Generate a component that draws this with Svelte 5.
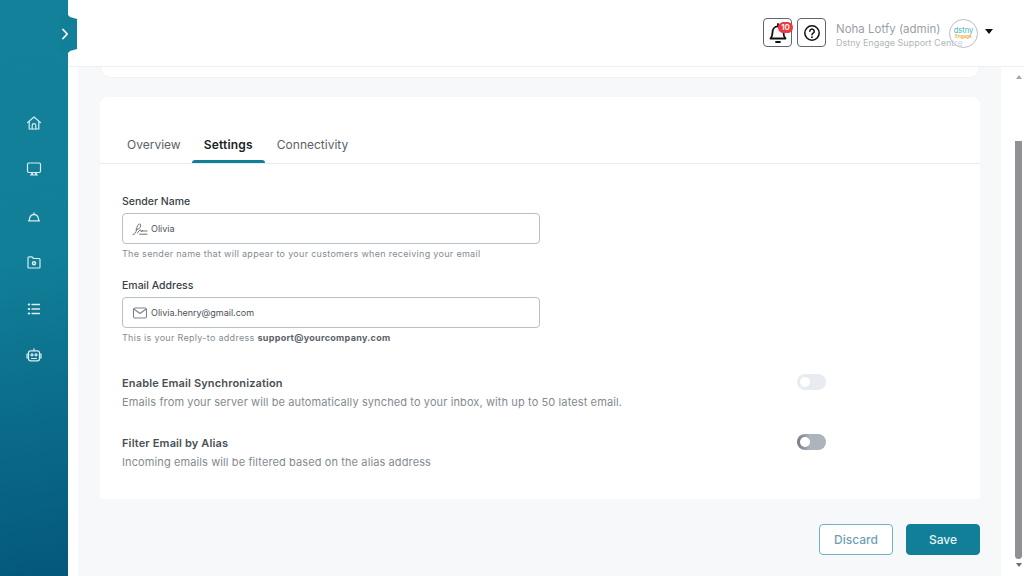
<script>
  const tabs = ['Overview', 'Settings', 'Connectivity'];
</script>

<div class="app">
  <aside class="sidebar">
    <div class="toggle">
      <svg width="10" height="12" viewBox="0 0 10 12" fill="none" stroke="#fff" stroke-width="1.8" stroke-linecap="round" stroke-linejoin="round"><path d="M3 1.500 7.200 6 3 10.500"/></svg>
    </div>
    <nav class="nav">
      <svg viewBox="0 0 16 16" fill="none" stroke="#dcecf1" stroke-width="1.200" stroke-linejoin="round" stroke-linecap="round"><path d="M1.500 7.600 8 2l6.500 5.600M3.200 6.500V14h9.600V6.500"/><path d="M6.200 14v-3.500a1.800 1.800 0 0 1 3.600 0V14"/></svg>
      <svg viewBox="0 0 16 16" fill="none" stroke="#dcecf1" stroke-width="1.200" stroke-linejoin="round" stroke-linecap="round"><rect x="1.500" y="2" width="13" height="9.500" rx="1.200"/><path d="M6 11.500 5.500 14M10 11.500l.5 2.500M4.500 14h7M6.500 11.500v2M9.500 11.500v2"/></svg>
      <svg viewBox="0 0 16 16" fill="none" stroke="#dcecf1" stroke-width="1.300" stroke-linejoin="round" stroke-linecap="round"><path d="M3.200 12.500C3.500 9 5.500 6.500 8 6.500s4.500 2.500 4.800 6M2.500 12.800h11M8 6.500V5"/></svg>
      <svg viewBox="0 0 16 16" fill="none" stroke="#dcecf1" stroke-width="1.200" stroke-linejoin="round" stroke-linecap="round"><path d="M2 3.800c0-.6.400-1 1-1h3l1.500 1.700H13c.6 0 1 .4 1 1V13c0 .6-.4 1-1 1H3c-.6 0-1-.4-1-1z"/><circle cx="8" cy="9.200" r="1.500" stroke-width="1.500"/></svg>
      <svg viewBox="0 0 16 16" fill="none" stroke="#dcecf1" stroke-width="1.300" stroke-linecap="round"><path d="M6 3.500h7.500M6 8h7.500M6 12.500h7.500"/><path d="M2.800 3.500h.4M2.800 8h.4M2.800 12.500h.4" stroke-width="2.200"/></svg>
      <svg viewBox="0 0 16 16" fill="none" stroke="#dcecf1" stroke-width="1.200" stroke-linejoin="round" stroke-linecap="round"><rect x="2.500" y="3.800" width="11" height="10" rx="2"/><path d="M8 3.800V1.800M2.500 7H1v4h1.500M13.500 7H15v4h-1.500M5.500 11.500h5"/><circle cx="6" cy="7.800" r="1"/><circle cx="10" cy="7.800" r="1"/></svg>
    </nav>
  </aside>

  <div class="right">
    <header class="header">
      <button class="icon-btn" aria-label="Notifications">
        <svg width="20" height="24" viewBox="0 0 20 24" fill="none" stroke="#111" stroke-width="1.800" stroke-linejoin="round" stroke-linecap="round"><path d="M2.500 17.500c1.500-1.500 2-3 2-6 0-3.600 2.200-6.200 5.500-6.200s5.500 2.600 5.500 6.200c0 3 .5 4.500 2 6z"/><path d="M8 21h4M10 5.300V3"/></svg>
        <span class="badge">10</span>
      </button>
      <button class="icon-btn" aria-label="Help">
        <svg width="18" height="18" viewBox="0 0 18 18" fill="none" stroke="#111" stroke-width="1.500" stroke-linecap="round"><circle cx="9" cy="9" r="7.200"/><path d="M6.800 7.200a2.200 2.200 0 1 1 3.400 1.900c-.8.500-1.200.9-1.200 1.700"/><path d="M9 13.100v.1" stroke-width="1.800"/></svg>
      </button>
      <div class="user">
        <div class="user-name">Noha Lotfy (admin)</div>
        <div class="user-org">Dstny Engage Support Centre</div>
      </div>
      <div class="avatar">
        <span class="logo-a">dstny</span>
        <span class="logo-b">Engage</span>
      </div>
      <span class="caret"></span>
    </header>

    <div class="body">
      <main class="content">
        <div class="stub"></div>
        <section class="card">
          <div class="tabs">
            {#each tabs as t, i}
              <div class="tab" class:active={i === 1}>{t}</div>
            {/each}
          </div>
          <div class="form">
            <div class="field">
              <div class="label">Sender Name</div>
              <div class="input">
                <svg width="16" height="14" viewBox="0 0 16 14" fill="none" stroke="#6f757d" stroke-width="1" stroke-linecap="round" stroke-linejoin="round"><path d="M1 12.500c2 .2 3-2 3.500-5 .4-2.500 1.200-5.500 3-5.500 1.300 0 1.500 1.600.6 3.200C7.300 7.200 5.200 7.800 4 7.300M5.500 11c1-1.500 2-3 3-3 .6 0 0 1.500.6 1.500.5 0 1-.5 1.500-.8M9.500 9h5.500M7.500 12.200h7.500"/></svg>
                <span>Olivia</span>
              </div>
              <div class="hint">The sender name that will appear to your customers when receiving your email</div>
            </div>
            <div class="field second">
              <div class="label">Email Address</div>
              <div class="input">
                <svg width="16" height="14" viewBox="0 0 16 14" fill="none" stroke="#7d838a" stroke-width="1.100" stroke-linejoin="round"><rect x="1.500" y="2" width="13" height="10" rx="1.500"/><path d="m1.800 3 6.200 4.500L14.200 3"/></svg>
                <span>Olivia.henry@gmail.com</span>
              </div>
              <div class="hint">This is your Reply-to address <b>support@yourcompany.com</b></div>
            </div>
            <div class="opt first">
              <div class="opt-text">
                <div class="opt-title">Enable Email Synchronization</div>
                <div class="opt-desc">Emails from your server will be automatically synched to your inbox, with up to 50 latest email.</div>
              </div>
              <span class="switch light"><i></i></span>
            </div>
            <div class="opt next">
              <div class="opt-text">
                <div class="opt-title">Filter Email by Alias</div>
                <div class="opt-desc">Incoming emails will be filtered based on the alias address</div>
              </div>
              <span class="switch dark"><i></i></span>
            </div>
          </div>
        </section>
        <div class="actions">
          <button class="btn ghost">Discard</button>
          <button class="btn solid">Save</button>
        </div>
      </main>
      <div class="scrollbar">
        <span class="arrow up"></span>
        <span class="thumb"></span>
        <span class="arrow down"></span>
      </div>
    </div>
  </div>
</div>

<style>
  :global(body) { margin: 0; background: #fff; }
  .app {
    width: 1024px; height: 576px; display: flex; overflow: hidden;
    font-family: Inter, "Liberation Sans", sans-serif; color: #3c424a;
  }
  .sidebar {
    width: 68px; flex: none; position: relative;
    background: linear-gradient(170deg, #128199 0%, #117f98 45%, #04587a 100%);
  }
  .toggle {
    position: absolute; left: 60px; top: 15px; width: 17px; height: 38px; box-sizing: border-box;
    background: #117f98; border-radius: 0 4px 4px 0; clip-path: polygon(0 0, 8px 0, 10px 2px, 17px 4px, 17px 34px, 10px 36px, 8px 38px, 0 38px);
    display: flex; align-items: center;
  }
  .nav {
    display: flex; flex-direction: column; align-items: center; gap: 30.400px; padding-top: 115px;
  }
  .nav svg { width: 16px; height: 16px; display: block; }
  .right { flex: 1; display: flex; flex-direction: column; min-width: 0; }
  .header {
    height: 67px; box-sizing: border-box; flex: none; background: #fff; border-bottom: 1px solid #eef0f2;
    display: flex; align-items: flex-start; padding: 18px 30px 0 695px;
  }
  .icon-btn {
    width: 29px; height: 29px; box-sizing: border-box; padding: 0; background: #fff; border: 1px solid #5f6670; border-radius: 4px;
    display: flex; align-items: center; justify-content: center; position: relative; margin-right: 5px;
  }
  .badge {
    position: absolute; top: 3px; right: -2px; width: 15px; height: 11px; border-radius: 6px; background: #f0383f; color: #fff;
    font: 600 8px/11px Inter, sans-serif; text-align: center;
  }
  .user { margin-left: 5px; width: 113px; white-space: nowrap; position: relative; }
  .user-name { font-size: 11.500px; line-height: 15px; margin-top: 4px; color: #9aa0a6; }
  .user-org { font-size: 9px; line-height: 12px; color: #b1b5ba; }
  .avatar {
    width: 29px; height: 29px; box-sizing: border-box; border: 1px solid #b9bdc6; border-radius: 50%; position: relative; z-index: 1;
    display: flex; flex-direction: column; align-items: center; justify-content: center; margin-top: 1px;
    background: rgba(255,255,255,.45);
  }
  .logo-a { font-size: 7.500px; color: #35b3c0; line-height: 6px; }
  .logo-b { font-size: 4.500px; color: #f0a530; line-height: 5px; font-weight: 600; }
  .caret {
    width: 0; height: 0; margin: 11px 0 0 7px;
    border-left: 4.500px solid transparent; border-right: 4.500px solid transparent; border-top: 5px solid #111;
  }
  .body { flex: 1; display: flex; min-height: 0; }
  .content {
    margin-left: 10px; width: 923px; flex: none; box-sizing: border-box; background: #f7f8fa; padding: 0 21px 0 22px;
    display: flex; flex-direction: column;
  }
  .stub {
    height: 11px; flex: none; background: #fff; border: 1px solid #f0f1f3; border-top: 0; border-radius: 0 0 10px 10px; box-sizing: border-box;
  }
  .card {
    margin-top: 19px; height: 402px; flex: none; background: #fff; border-radius: 8px 8px 0 0; box-sizing: border-box;
  }
  .tabs {
    height: 67px; box-sizing: border-box; border-bottom: 1px solid #e9ebee; display: flex; padding: 30px 0 0 15px; margin-left: -1px;
  }
  .tab {
    padding: 10px 12px 0; height: 36px; box-sizing: border-box; font-size: 12px; line-height: 16px; color: #5b6169; position: relative;
  }
  .tab:first-child { padding-left: 13px; padding-right: 11px; }
  .tab.active { color: #1b1f24; font-weight: 600; letter-spacing: .2px; }
  .tab.active::after {
    content: ""; position: absolute; left: 0; right: 0; bottom: 0; height: 3px; background: #117f98; border-radius: 3px 3px 0 0;
  }
  .form { padding: 31px 0 0 22px; }
  .field.second { margin-top: 19px; }
  .label { font-size: 10.500px; line-height: 14px; color: #3a3f45; font-weight: 500; }
  .input {
    width: 418px; height: 31px; box-sizing: border-box; margin-top: 4px; border: 1px solid #b9bfc7; border-radius: 4px; background: #fff;
    display: flex; align-items: center; gap: 3px; padding-left: 9px; font-size: 9px; color: #4a5058;
  }
  .hint { margin-top: 4px; font-size: 9px; line-height: 12px; color: #868b92; letter-spacing: .3px; }
  .hint b { color: #5b6169; font-weight: 700; }
  .opt { display: flex; width: 704px; justify-content: space-between; align-items: flex-start; }
  .opt.first { margin-top: 32px; }
  .opt.next { margin-top: 27px; }
  .opt-title { font-size: 11px; line-height: 14px; font-weight: 600; color: #4a4f56; letter-spacing: .14px; }
  .opt-desc { margin-top: 5px; font-size: 11px; line-height: 14px; color: #858a91; letter-spacing: .11px; }
  .switch { width: 29px; height: 16px; border-radius: 8px; display: block; position: relative; margin-top: -2px; flex: none; }
  .switch.light { background: #e8ebef; }
  .switch.dark { background: linear-gradient(90deg, #727a85, #aeb4bb 45%); }
  .switch i { position: absolute; left: 3px; top: 3px; width: 10px; height: 10px; border-radius: 50%; background: #fff; }
  .actions { display: flex; justify-content: flex-end; gap: 13px; margin-top: 25px; }
  .btn {
    width: 74px; height: 31px; box-sizing: border-box; border-radius: 4px; font: 500 12px Inter, sans-serif; padding: 0;
  }
  .ghost { background: #fff; border: 1px solid #6fb3c3; color: #6e9fb1; }
  .solid { background: #117f98; border: 1px solid #117f98; color: #e8f3f6; }
  .scrollbar { flex: 1; display: flex; flex-direction: column; align-items: flex-end; padding-right: 2px; box-sizing: border-box; background: #fff; }
  .arrow { width: 0; height: 0; border-left: 3.500px solid transparent; border-right: 3.500px solid transparent; }
  .arrow.up { border-bottom: 4px solid #a4a7aa; margin-top: 8px; }
  .arrow.down { border-top: 4px solid #6a6d70; margin-top: 4px; }
  .thumb { width: 7px; height: 418px; background: #8f9194; border-radius: 0 0 4px 4px; margin-top: 62px; }
</style>
